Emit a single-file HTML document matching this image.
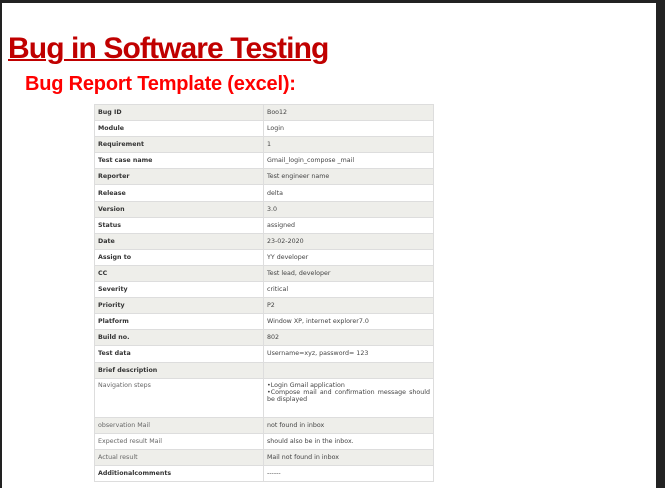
<!DOCTYPE html>
<html><head><meta charset="utf-8"><style>
html,body{margin:0;padding:0;width:665px;height:488px;overflow:hidden;background:#222;}
#pg{position:absolute;left:2px;top:3px;width:654px;height:485px;background:#fff;}
h1{position:absolute;left:6px;top:29px;margin:0;font:bold 30px "Liberation Sans",sans-serif;color:#c00000;text-decoration:underline;text-decoration-thickness:2px;letter-spacing:-0.9px;white-space:nowrap;}
h2{position:absolute;left:23px;top:70px;margin:0;font:bold 20px "Liberation Sans",sans-serif;color:#f00;letter-spacing:-0.2px;white-space:nowrap;}
table{position:absolute;left:92px;top:101px;width:340px;border-collapse:collapse;font-family:"DejaVu Sans","Liberation Sans",sans-serif;font-size:6.3px;color:#444;}
td{border:1px solid #ddd;height:15.1px;padding:0 3px;vertical-align:middle;}
td:first-child{width:162px;font-weight:bold;color:#333;}
tr:nth-child(odd){background:#eeeeea;}
tr.l td:first-child{font-weight:normal;color:#666;}
tr.n td{height:35px;vertical-align:top;padding-top:3px;}
</style></head><body><div id="pg">
<h1>Bug in Software Testing</h1>
<h2>Bug Report Template (excel):</h2>
<table>
<tr><td>Bug ID</td><td>Boo12</td></tr>
<tr><td>Module</td><td>Login</td></tr>
<tr><td>Requirement</td><td>1</td></tr>
<tr><td>Test case name</td><td>Gmail_login_compose _mail</td></tr>
<tr><td>Reporter</td><td>Test engineer name</td></tr>
<tr><td>Release</td><td>delta</td></tr>
<tr><td>Version</td><td>3.0</td></tr>
<tr><td>Status</td><td>assigned</td></tr>
<tr><td>Date</td><td>23-02-2020</td></tr>
<tr><td>Assign to</td><td>YY developer</td></tr>
<tr><td>CC</td><td>Test lead, developer</td></tr>
<tr><td>Severity</td><td>critical</td></tr>
<tr><td>Priority</td><td>P2</td></tr>
<tr><td>Platform</td><td>Window XP, internet explorer7.0</td></tr>
<tr><td>Build no.</td><td>802</td></tr>
<tr><td>Test data</td><td>Username=xyz, password= 123</td></tr>
<tr><td>Brief description</td><td></td></tr>
<tr class="l n"><td>Navigation steps</td><td style="text-align:justify">•Login Gmail application<br>•Compose mail and confirmation message should be displayed</td></tr>
<tr class="l"><td>observation Mail</td><td>not found in inbox</td></tr>
<tr class="l"><td>Expected result Mail</td><td>should also be in the inbox.</td></tr>
<tr class="l"><td>Actual result</td><td>Mail not found in inbox</td></tr>
<tr><td>Additionalcomments</td><td>------</td></tr>
</table>
</div></body></html>
